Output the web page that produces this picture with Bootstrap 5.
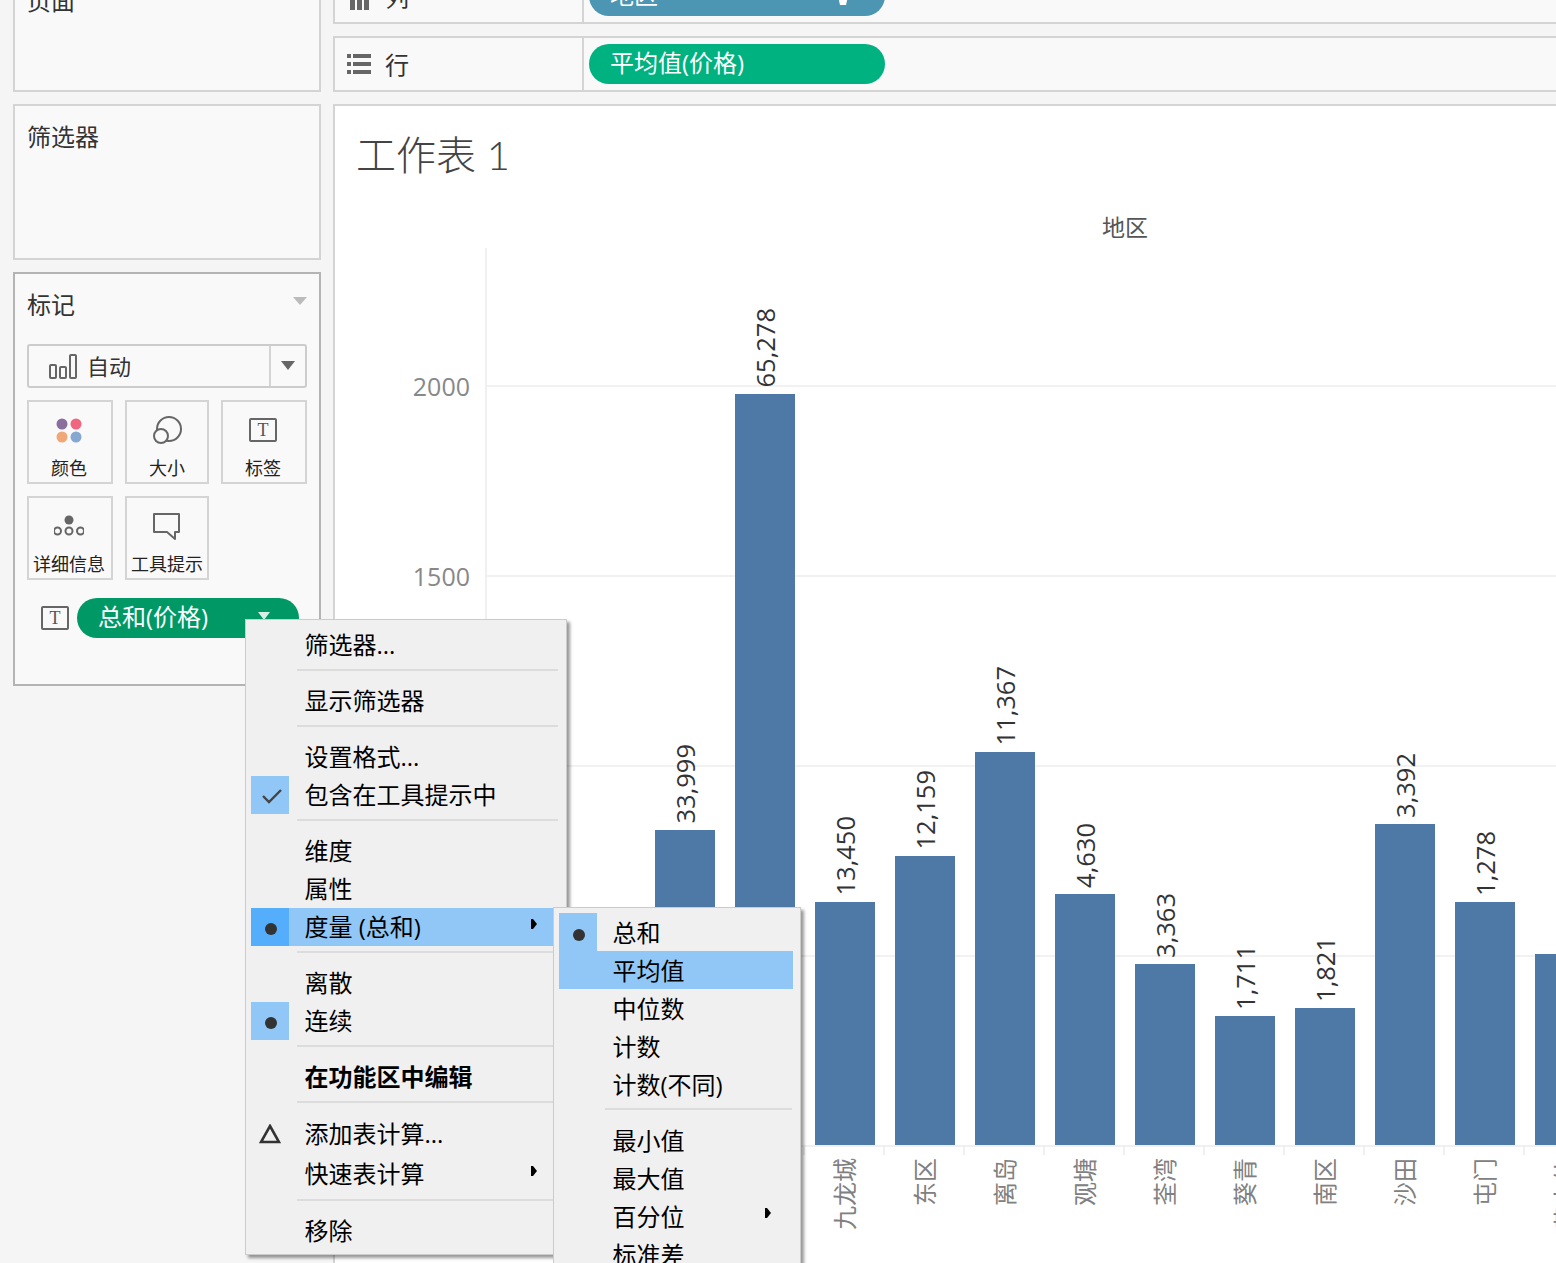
<!DOCTYPE html>
<html lang="zh">
<head>
<meta charset="utf-8">
<title>工作表 1</title>
<link href="https://cdn.jsdelivr.net/npm/bootstrap@5.3.0/dist/css/bootstrap.min.css" rel="stylesheet">
<style>
html,body{height:100%;overflow:hidden;background:#f5f5f5;}
body{font-family:"Open Sans","Noto Sans CJK SC",sans-serif;font-size:24px;color:#333;}
.stage{margin-top:-32px;height:calc(100vh + 40px);overflow:hidden;}
.leftcol{width:333px;flex:none;padding:0 12px 0 13px;}
.rightcol{width:1400px;flex:none;}
.tpanel{width:308px;background:#f9f9f9;border:2px solid #d4d4d4;padding:14px 12px 0;flex:none;}
.tpanel + .tpanel{margin-top:12px;}
.tpanel-title{line-height:34px;height:34px;}
.p-pages{height:124px;}
.p-filters{height:156px;}
.p-marks{height:414px;border-color:#b4b4b4;}
.mark-select{height:44px;margin-top:22px;border:2px solid #ccc;border-radius:3px;}
.mark-select-main{padding-left:20px;gap:10px;font-size:22px;line-height:44px;}
.mark-select-drop{width:36px;border-left:2px solid #d4d4d4;}
.markbtn{display:flex;flex-direction:column;align-items:center;height:84px;padding:15px 0 0;background:transparent;border:2px solid #d4d4d4;border-radius:0;font-size:18px;line-height:24px;color:#222;}
.markbtn svg{margin-bottom:11px;margin-top:-2px;}
.w86{width:86px;padding-right:2px;}
.w84{width:84px;}
.markgrid{margin-top:12px;gap:12px;}
.pillrow{margin:18px 0 0 14px;gap:8px;}
.pill-shape{height:40px;color:#fff;line-height:38px;padding-left:21px;}
.pill-sum{width:222px;background:#009966;}
.pill-avg{width:296px;background:#00b27f;margin-left:5px;}
.pill-geo{width:296px;background:#4c96b4;margin-left:5px;}
.pill-caret-sum{margin-right:29px;align-self:flex-start;}
.pill-caret-geo{margin-right:36px;}
.shelf{height:56px;background:#f9f9f9;border:2px solid #d4d4d4;border-right:0;}
.shelf + .shelf{margin-top:12px;}
.shelf-head{width:249px;height:100%;border-right:2px solid #d4d4d4;padding-left:12px;gap:14px;flex:none;}
.shelf-head span{padding-top:2px;}
.viewcard{margin-top:12px;background:#fff;border:2px solid #d4d4d4;border-right:0;flex:1 1 auto;}
.sheet-title{font-family:Lato,"Noto Sans CJK SC",sans-serif;font-size:40px;font-weight:300;line-height:50px;padding:24px 0 0 21px;color:#444;}
.axis-title{margin:31px 0 5px 150px;width:1280px;text-align:center;font-size:23px;line-height:32px;color:#555;}
.yaxis{width:150px;flex:none;text-align:right;padding-right:15px;color:#888;font-size:25px;line-height:32px;padding-top:122px;}
.yaxis div + div{margin-top:158px;}
.plot{width:1280px;height:899px;border-bottom:2px solid #f0f0f0;box-shadow:inset 2px 0 0 #f0f0f0;
  background-image:linear-gradient(to bottom,transparent 137px,#f2f2f2 137px,#f2f2f2 139px,transparent 139px);background-size:100% 190px;background-repeat:repeat-y;}
.barcol{width:80px;flex:none;height:100%;display:flex;flex-direction:column;justify-content:flex-end;align-items:center;}
.barfill{width:60px;background:#4e79a7;}
.sidetext{writing-mode:vertical-rl;text-orientation:sideways;transform:rotate(180deg);white-space:nowrap;line-height:24px;}
.datalabel{color:#333;margin-bottom:6px;font-size:25.5px;}
.ticks{margin-left:150px;height:8px;}
.tickcell{width:80px;flex:none;border-right:2px solid #f0f0f0;}
.catrow{margin-left:150px;padding-top:3px;}
.catcell{width:80px;flex:none;display:flex;justify-content:center;color:#808080;align-items:flex-start;}
.tmenu.dropdown-menu{display:block;background:#f0f0f0;border:1px solid #ccc;border-radius:0;padding:6px 0;margin:0;min-width:0;box-shadow:3px 3px 3px rgba(0,0,0,.4);font-size:24px;}
.tmenu-main{top:619px;left:245px;width:322px;height:636px;}
.tmenu-sub{top:907px;left:553px;width:248px;padding-top:5px !important;}
.tmenu .dropdown-item{display:flex;align-items:center;height:38px;padding:0;margin:0 5px;width:auto;color:#000;line-height:38px;background:transparent;}
.tmenu .tall{height:40px;}
.tmenu .hi{background:#90c7f6;}
.tmenu .dropdown-divider{border-top:2px solid #dcdcdc;margin:5px 8px 11px 51px;opacity:1;}
.tmenu-sub .dropdown-item{margin-right:7px;}
.tmenu-sub .dropdown-item > .txt{padding-top:1px;}
.gutter{width:38px;height:38px;flex:none;margin-right:15.5px;display:flex;align-items:center;justify-content:center;}
.gutter-on{background:#90c7f6;}
.gutter-strong{background:#55aefb;}
.gdot{margin-top:3px;margin-left:1px;}
.gdot-sub{margin-top:5px;margin-left:2px;}
.gcheck{margin-top:2px;margin-left:3px;}
.arrow{margin-left:auto;margin-right:24px;margin-bottom:6px;}
.tmenu-sub .arrow{margin-right:22px;}
</style>
</head>
<body>
<div class="stage d-flex">
  <div class="leftcol d-flex flex-column">
    <div class="tpanel p-pages"><div class="tpanel-title">页面</div></div>
    <div class="tpanel p-filters"><div class="tpanel-title">筛选器</div></div>
    <div class="tpanel p-marks">
      <div class="tpanel-title d-flex justify-content-between">
        <span>标记</span>
        <svg width="14" height="34" viewBox="0 0 14 34"><polygon points="0,9 14,9 7,17" fill="#bbb"/></svg>
      </div>
      <div class="mark-select d-flex align-items-center">
        <div class="mark-select-main flex-grow-1 d-flex align-items-center">
          <svg width="28" height="26" viewBox="0 0 28 26" fill="none" stroke="#666" stroke-width="2"><rect x="1" y="12" width="6" height="13" rx="1"/><rect x="11" y="14" width="6" height="11" rx="1" /><rect x="21" y="2" width="6" height="23" rx="1"/></svg>
          <span>自动</span>
        </div>
        <div class="mark-select-drop h-100 d-flex align-items-center justify-content-center">
          <svg width="14" height="10" viewBox="0 0 14 10"><polygon points="0,0 14,0 7,9" fill="#666"/></svg>
        </div>
      </div>
      <div class="d-flex markgrid">
        <button class="markbtn w86" type="button">
          <svg width="30" height="30" viewBox="0 0 30 30"><circle cx="8" cy="9" r="5.5" fill="#8a6f9c"/><circle cx="22" cy="9" r="5.5" fill="#f0657f"/><circle cx="8" cy="22" r="5.5" fill="#f0a878"/><circle cx="22" cy="22" r="5.5" fill="#86a8d0"/></svg>
          颜色</button>
        <button class="markbtn w84" type="button">
          <svg width="30" height="30" viewBox="0 0 30 30" fill="none" stroke="#666" stroke-width="2"><circle cx="17" cy="14" r="12"/><circle cx="9" cy="21" r="7" fill="#f9f9f9"/></svg>
          大小</button>
        <button class="markbtn w86" type="button">
          <svg width="30" height="30" viewBox="0 0 30 30"><rect x="2" y="4" width="26" height="22" rx="1" fill="none" stroke="#666" stroke-width="2"/><text x="15" y="21" text-anchor="middle" font-family="Liberation Serif" font-size="18" fill="#555">T</text></svg>
          标签</button>
      </div>
      <div class="d-flex markgrid">
        <button class="markbtn w86" type="button">
          <svg width="30" height="30" viewBox="0 0 30 30" fill="none" stroke="#666" stroke-width="2"><circle cx="15" cy="9" r="4.5" fill="#666" stroke="none"/><circle cx="3.5" cy="20" r="3.5"/><circle cx="15" cy="20" r="3.5"/><circle cx="26.5" cy="20" r="3.5"/></svg>
          详细信息</button>
        <button class="markbtn w84" type="button">
          <svg width="30" height="30" viewBox="0 0 30 30" fill="none" stroke="#666" stroke-width="2"><path d="M2 3H27V21H23V28L15 21H2Z" stroke-linejoin="round"/></svg>
          工具提示</button>
      </div>
      <div class="d-flex align-items-center pillrow">
        <svg width="28" height="24" viewBox="0 0 28 24"><rect x="1" y="1" width="26" height="22" rx="1" fill="none" stroke="#666" stroke-width="2"/><text x="14" y="18" text-anchor="middle" font-family="Liberation Serif" font-size="18" fill="#555">T</text></svg>
        <div class="pill-shape pill-sum rounded-pill d-flex justify-content-between">
          <span>总和(价格)</span>
          <svg width="12" height="40" viewBox="0 0 12 40" class="pill-caret-sum"><polygon points="0,14 12,14 6,22" fill="#d8efe6"/></svg>
        </div>
      </div>
    </div>
  </div>

  <div class="rightcol d-flex flex-column">
    <div class="shelf d-flex align-items-center">
      <div class="shelf-head d-flex align-items-center">
        <svg width="24" height="28" viewBox="0 0 24 28" fill="#666"><rect x="3" y="2" width="5" height="26"/><rect x="10" y="2" width="5" height="26" /><rect x="17" y="2" width="5" height="26"/></svg>
        <span>列</span>
      </div>
      <div class="pill-shape pill-geo rounded-pill d-flex justify-content-between">
        <span>地区</span>
        <svg width="12" height="40" viewBox="0 0 12 40" class="pill-caret-geo"><polygon points="0,16 12,16 9,29 3,29" fill="#fff"/></svg>
      </div>
    </div>
    <div class="shelf d-flex align-items-center">
      <div class="shelf-head d-flex align-items-center">
        <svg width="24" height="20" viewBox="0 0 24 20" fill="#666"><rect x="0" y="0" width="4" height="4"/><rect x="6" y="0" width="18" height="4"/><rect x="0" y="8" width="4" height="4"/><rect x="6" y="8" width="18" height="4"/><rect x="0" y="16" width="4" height="4"/><rect x="6" y="16" width="18" height="4"/></svg>
        <span>行</span>
      </div>
      <div class="pill-shape pill-avg rounded-pill"><span>平均值(价格)</span></div>
    </div>
    <div class="viewcard">
      <div class="sheet-title">工作表 1</div>
      <div class="axis-title">地区</div>
      <div class="d-flex">
        <div class="yaxis"><div>2000</div><div>1500</div></div>
        <div class="plot d-flex">
          <div class="barcol"><div class="barfill" style="height:150px"></div></div>
          <div class="barcol"><div class="barfill" style="height:150px"></div></div>
          <div class="barcol"><div class="sidetext datalabel">33,999</div><div class="barfill" style="height:315px"></div></div>
          <div class="barcol"><div class="sidetext datalabel">65,278</div><div class="barfill" style="height:751px"></div></div>
          <div class="barcol"><div class="sidetext datalabel">13,450</div><div class="barfill" style="height:243px"></div></div>
          <div class="barcol"><div class="sidetext datalabel">12,159</div><div class="barfill" style="height:289px"></div></div>
          <div class="barcol"><div class="sidetext datalabel">11,367</div><div class="barfill" style="height:393px"></div></div>
          <div class="barcol"><div class="sidetext datalabel">4,630</div><div class="barfill" style="height:251px"></div></div>
          <div class="barcol"><div class="sidetext datalabel">3,363</div><div class="barfill" style="height:181px"></div></div>
          <div class="barcol"><div class="sidetext datalabel">1,711</div><div class="barfill" style="height:129px"></div></div>
          <div class="barcol"><div class="sidetext datalabel">1,821</div><div class="barfill" style="height:137px"></div></div>
          <div class="barcol"><div class="sidetext datalabel">3,392</div><div class="barfill" style="height:321px"></div></div>
          <div class="barcol"><div class="sidetext datalabel">1,278</div><div class="barfill" style="height:243px"></div></div>
          <div class="barcol"><div class="barfill" style="height:191px"></div></div>
        </div>
      </div>
      <div class="ticks d-flex">
        <div class="tickcell"></div><div class="tickcell"></div><div class="tickcell"></div><div class="tickcell"></div><div class="tickcell"></div><div class="tickcell"></div><div class="tickcell"></div><div class="tickcell"></div><div class="tickcell"></div><div class="tickcell"></div><div class="tickcell"></div><div class="tickcell"></div><div class="tickcell"></div><div class="tickcell"></div>
      </div>
      <div class="catrow d-flex">
        <div class="catcell"></div><div class="catcell"></div><div class="catcell"></div><div class="catcell"></div>
        <div class="catcell"><span class="sidetext">九龙城</span></div>
        <div class="catcell"><span class="sidetext">东区</span></div>
        <div class="catcell"><span class="sidetext">离岛</span></div>
        <div class="catcell"><span class="sidetext">观塘</span></div>
        <div class="catcell"><span class="sidetext">荃湾</span></div>
        <div class="catcell"><span class="sidetext">葵青</span></div>
        <div class="catcell"><span class="sidetext">南区</span></div>
        <div class="catcell"><span class="sidetext">沙田</span></div>
        <div class="catcell"><span class="sidetext">屯门</span></div>
        <div class="catcell"><span class="sidetext">黄大仙</span></div>
      </div>
    </div>
  </div>
</div>

<ul class="dropdown-menu tmenu tmenu-main list-unstyled">
  <li><a class="dropdown-item" href="#"><span class="gutter"></span>筛选器...</a></li>
  <li><hr class="dropdown-divider"></li>
  <li><a class="dropdown-item" href="#"><span class="gutter"></span>显示筛选器</a></li>
  <li><hr class="dropdown-divider"></li>
  <li><a class="dropdown-item" href="#"><span class="gutter"></span>设置格式...</a></li>
  <li><a class="dropdown-item" href="#"><span class="gutter gutter-on"><svg class="gcheck" width="22" height="18" viewBox="0 0 22 18" fill="none" stroke="#444" stroke-width="2.4"><path d="M2 9L8 15L20 3"/></svg></span>包含在工具提示中</a></li>
  <li><hr class="dropdown-divider"></li>
  <li><a class="dropdown-item" href="#"><span class="gutter"></span>维度</a></li>
  <li><a class="dropdown-item" href="#"><span class="gutter"></span>属性</a></li>
  <li><a class="dropdown-item hi" href="#"><span class="gutter gutter-strong"><svg class="gdot" width="12" height="12" viewBox="0 0 12 12"><circle cx="6" cy="6" r="6" fill="#333"/></svg></span>度量 (总和)<svg class="arrow" width="6" height="10" viewBox="0 0 6 10"><path d="M0 0H2L6 5L2 10H0Z" fill="#000"/></svg></a></li>
  <li><hr class="dropdown-divider"></li>
  <li><a class="dropdown-item" href="#"><span class="gutter"></span>离散</a></li>
  <li><a class="dropdown-item" href="#"><span class="gutter gutter-on"><svg class="gdot" width="12" height="12" viewBox="0 0 12 12"><circle cx="6" cy="6" r="6" fill="#333"/></svg></span>连续</a></li>
  <li><hr class="dropdown-divider"></li>
  <li><a class="dropdown-item fw-bold" href="#"><span class="gutter"></span>在功能区中编辑</a></li>
  <li><hr class="dropdown-divider"></li>
  <li><a class="dropdown-item tall" href="#"><span class="gutter"><svg width="22" height="20" viewBox="0 0 22 20" fill="none" stroke="#333" stroke-width="2.6"><path d="M11 2L20 18H2Z"/></svg></span>添加表计算...</a></li>
  <li><a class="dropdown-item tall" href="#"><span class="gutter"></span>快速表计算<svg class="arrow" width="6" height="10" viewBox="0 0 6 10"><path d="M0 0H2L6 5L2 10H0Z" fill="#000"/></svg></a></li>
  <li><hr class="dropdown-divider"></li>
  <li><a class="dropdown-item" href="#"><span class="gutter"></span>移除</a></li>
</ul>

<ul class="dropdown-menu tmenu tmenu-sub list-unstyled">
  <li><a class="dropdown-item" href="#"><span class="gutter gutter-on"><svg class="gdot-sub" width="12" height="12" viewBox="0 0 12 12"><circle cx="6" cy="6" r="6" fill="#333"/></svg></span><span class="txt">总和</span></a></li>
  <li><a class="dropdown-item hi" href="#"><span class="gutter"></span><span class="txt">平均值</span></a></li>
  <li><a class="dropdown-item" href="#"><span class="gutter"></span><span class="txt">中位数</span></a></li>
  <li><a class="dropdown-item" href="#"><span class="gutter"></span><span class="txt">计数</span></a></li>
  <li><a class="dropdown-item" href="#"><span class="gutter"></span><span class="txt">计数(不同)</span></a></li>
  <li><hr class="dropdown-divider"></li>
  <li><a class="dropdown-item" href="#"><span class="gutter"></span><span class="txt">最小值</span></a></li>
  <li><a class="dropdown-item" href="#"><span class="gutter"></span><span class="txt">最大值</span></a></li>
  <li><a class="dropdown-item" href="#"><span class="gutter"></span><span class="txt">百分位</span><svg class="arrow" width="6" height="10" viewBox="0 0 6 10"><path d="M0 0H2L6 5L2 10H0Z" fill="#000"/></svg></a></li>
  <li><a class="dropdown-item" href="#"><span class="gutter"></span><span class="txt">标准差</span></a></li>
</ul>

<script src="https://cdn.jsdelivr.net/npm/bootstrap@5.3.0/dist/js/bootstrap.bundle.min.js"></script>
</body>
</html>
